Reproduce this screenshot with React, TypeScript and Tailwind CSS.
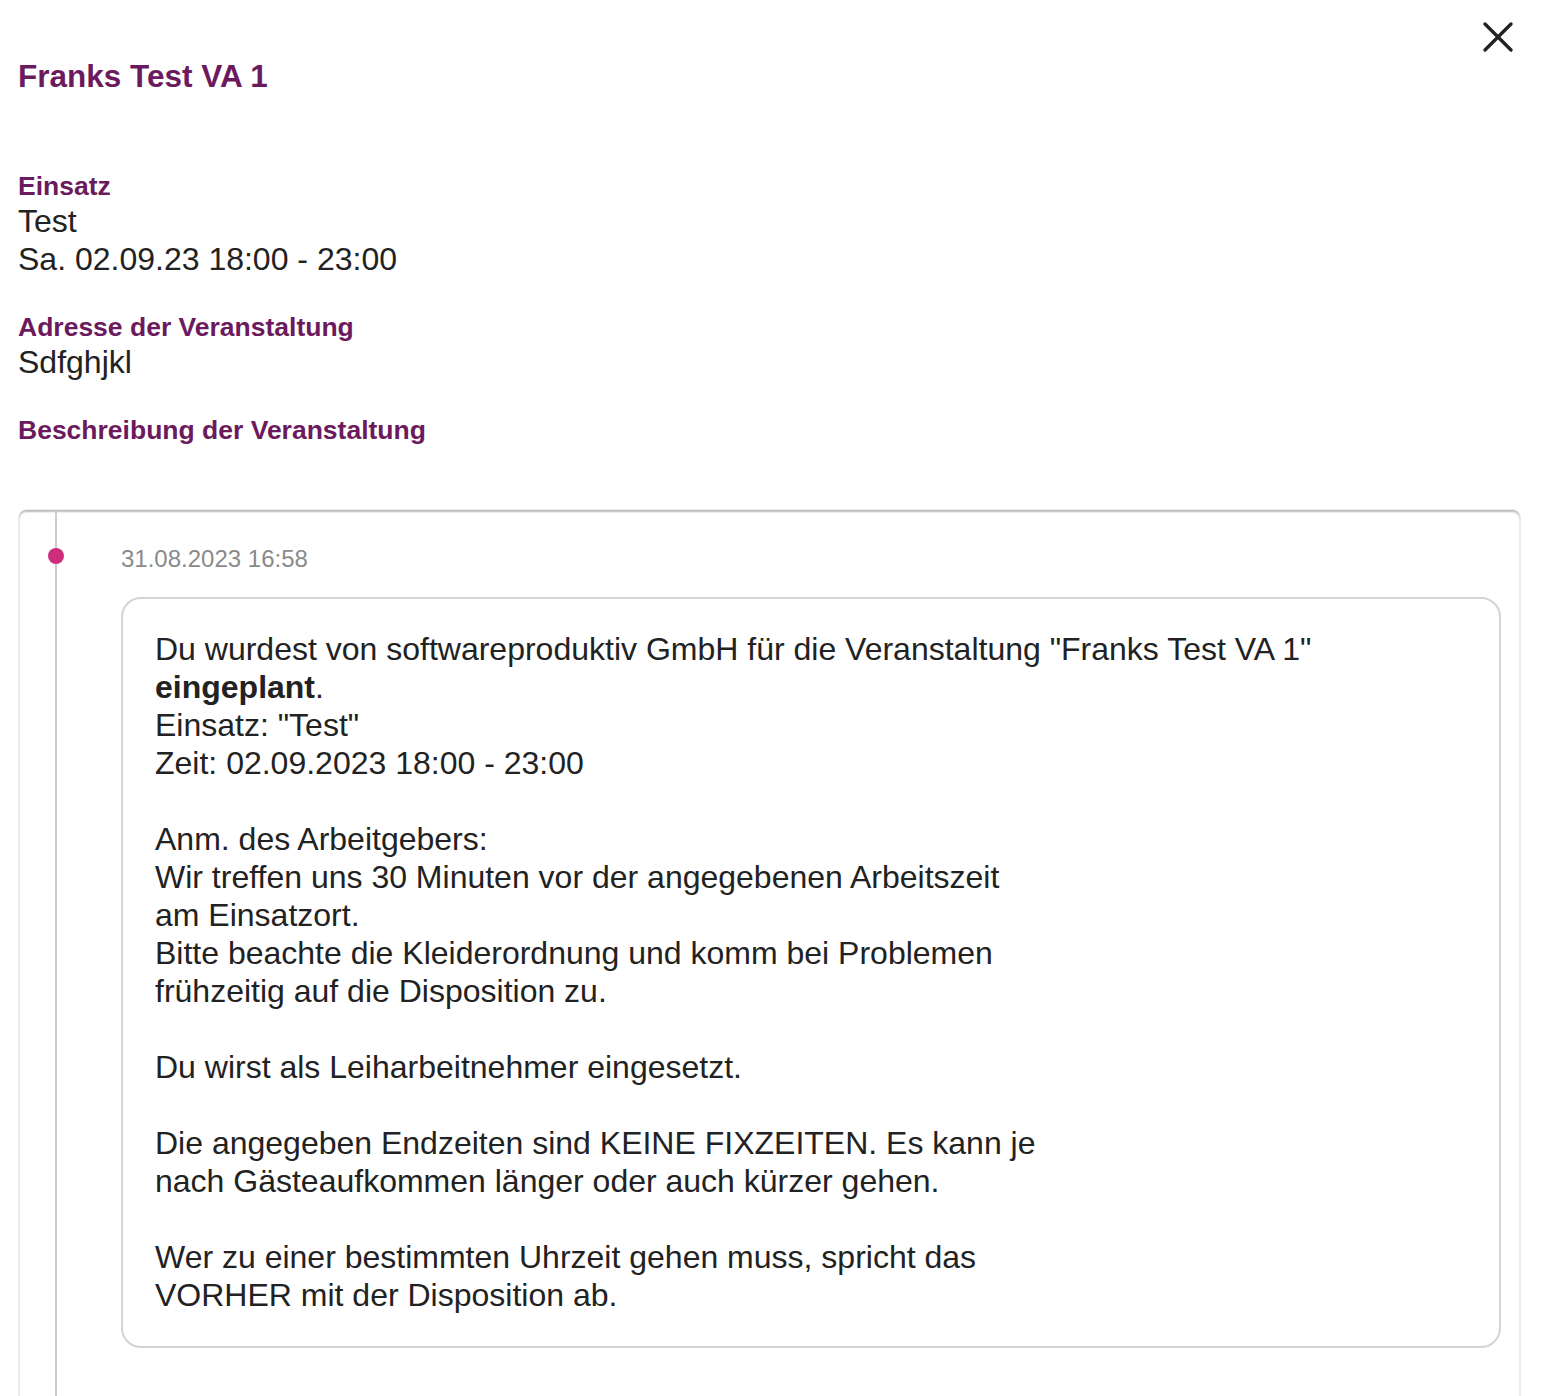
import React from "react";

const font = { fontFamily: '"Liberation Sans", Arial, Helvetica, sans-serif' };

export default function App() {
  return (
    <div className="relative min-h-[1396px] bg-white text-[#222]" style={font}>
      <button className="absolute left-[1482px] top-[21px] h-8 w-8" aria-label="close">
        <svg width="32" height="32" viewBox="0 0 32 32">
          <path d="M3 3 L29 29 M29 3 L3 29" stroke="#222" strokeWidth="3.4" strokeLinecap="round" fill="none" />
        </svg>
      </button>

      <div className="px-[18px] pt-[58px]">
        <h1 className="text-[31.5px] font-bold leading-[36px] text-[#6b1a5e]">Franks Test VA 1</h1>

        <div className="mt-[77px]">
          <div className="text-[26.5px] font-bold leading-[31px] text-[#6b1a5e]">Einsatz</div>
          <div className="text-[32px] leading-[38.4px]">Test</div>
          <div className="text-[32px] leading-[38.4px]">Sa. 02.09.23 18:00 - 23:00</div>
        </div>

        <div className="mt-[33px]">
          <div className="text-[26.5px] font-bold leading-[31px] text-[#6b1a5e]">Adresse der Veranstaltung</div>
          <div className="text-[32px] leading-[38.4px]">Sdfghjkl</div>
        </div>

        <div className="mt-[34px]">
          <div className="text-[26.5px] font-bold leading-[31px] text-[#6b1a5e]">Beschreibung der Veranstaltung</div>
        </div>
      </div>

      <div className="relative ml-[18px] mr-[41px] mt-[63px] rounded-lg border border-[#ececec] pb-[80px] pl-[102px] pr-[19px] pt-[35px] shadow-[inset_0_2px_2px_rgba(0,0,0,0.28)]">
        <div className="absolute bottom-0 left-[36px] top-0 w-[2px] bg-[#cccccc]" />
        <div className="absolute left-[29px] top-[38px] h-4 w-4 rounded-full bg-[#cc2e7c]" />

        <div className="text-[24px] leading-[28px] text-[#8a8a8a]">31.08.2023 16:58</div>

        <div className="mt-[24px] rounded-[20px] border-2 border-[#d4d4d4] px-8 pb-8 pt-[31px] text-[32px] leading-[38px] text-[#222]">
          <div>Du wurdest von softwareproduktiv GmbH für die Veranstaltung "Franks Test VA 1"</div>
          <div>
            <b>eingeplant</b>.
          </div>
          <div>Einsatz: "Test"</div>
          <div>Zeit: 02.09.2023 18:00 - 23:00</div>
          <div>&nbsp;</div>
          <div>Anm. des Arbeitgebers:</div>
          <div>Wir treffen uns 30 Minuten vor der angegebenen Arbeitszeit</div>
          <div>am Einsatzort.</div>
          <div>Bitte beachte die Kleiderordnung und komm bei Problemen</div>
          <div>frühzeitig auf die Disposition zu.</div>
          <div>&nbsp;</div>
          <div>Du wirst als Leiharbeitnehmer eingesetzt.</div>
          <div>&nbsp;</div>
          <div>Die angegeben Endzeiten sind KEINE FIXZEITEN. Es kann je</div>
          <div>nach Gästeaufkommen länger oder auch kürzer gehen.</div>
          <div>&nbsp;</div>
          <div>Wer zu einer bestimmten Uhrzeit gehen muss, spricht das</div>
          <div>VORHER mit der Disposition ab.</div>
        </div>
      </div>
    </div>
  );
}
